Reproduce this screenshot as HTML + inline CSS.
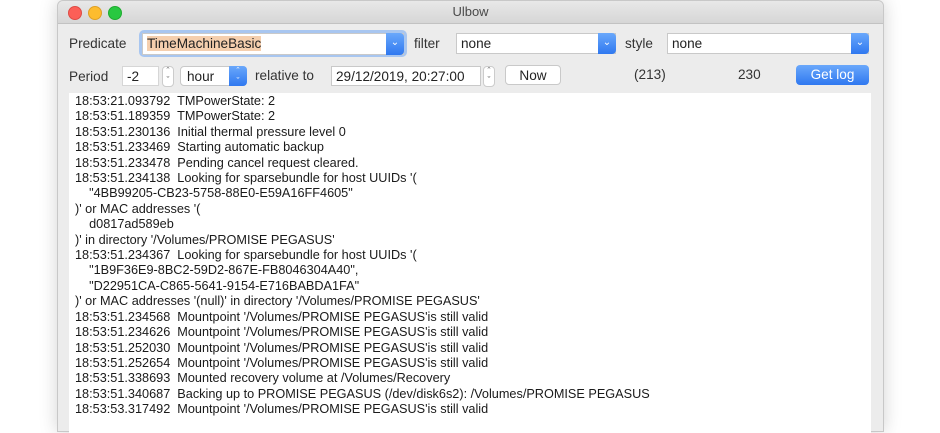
<!DOCTYPE html>
<html><head><style>
body{margin:0;width:940px;height:418px;background:#fff;position:relative;overflow:hidden;font-family:"Liberation Sans",sans-serif;font-size:13px;color:#222}
.win{position:absolute;left:57px;top:0;width:825px;height:430px;background:#ececec;border:1px solid #c8c8c8;border-radius:6px 6px 0 0;box-shadow:0 0 18px rgba(0,0,0,.18)}
.tb{position:absolute;left:0;top:0;width:825px;height:22px;background:linear-gradient(#e8e8e8,#d6d6d6);border-bottom:1px solid #c2c2c2;border-radius:6px 6px 0 0;text-align:center;line-height:22px;color:#4a4a4a;font-size:13px}
.dot{position:absolute;top:5px;width:12px;height:12px;border-radius:50%}
.a{position:absolute}
.lbl{position:absolute;font-size:13.6px;color:#333}
.box{position:absolute;background:#fff;border:1px solid #c9c9c9;box-sizing:border-box;font-size:13.6px;line-height:20px;padding-left:4px}
.bl{position:absolute;top:-1px;right:-1px;bottom:-1px;width:18px;background:linear-gradient(#6aa8fb,#2f78f0);border-radius:0 4px 4px 0;color:#fff;font-size:10px;text-align:center}
.log{position:absolute;left:11px;top:92px;width:802px;height:340px;background:#fff;font-size:12.7px;line-height:15.4px;padding:1px 0 0 6px;box-sizing:border-box;white-space:pre;color:#1a1a1a}
.st{position:absolute;width:12px;height:21px;border:1px solid #ccc;border-radius:4px;background:#fff;box-sizing:border-box;font-size:9px;line-height:9px;text-align:center;color:#555}
</style></head><body>
<div class="win">
<div class="tb">Ulbow
<div class="dot" style="left:10px;background:#fc5f57;border:0.5px solid #de4b44"></div>
<div class="dot" style="left:30px;background:#fdbc2e;border:0.5px solid #dfa024"></div>
<div class="dot" style="left:50px;background:#28c840;border:0.5px solid #1eab2f"></div>
</div>
<div class="lbl" style="left:11px;top:35px">Predicate</div>
<div class="a" style="left:81px;top:29px;width:268px;height:27px;border-radius:5px;background:#a8c6f0"></div>
<div class="box" style="left:84px;top:32px;width:262px;height:22px"><span style="background:#f5cfae">TimeMachineBasic</span><div class="bl">&#8964;</div></div>
<div class="lbl" style="left:356px;top:35px">filter</div>
<div class="box" style="left:398px;top:32px;width:160px;height:21px">none<div class="bl">&#8964;</div></div>
<div class="lbl" style="left:567px;top:35px">style</div>
<div class="box" style="left:609px;top:32px;width:202px;height:21px">none<div class="bl">&#8964;</div></div>

<div class="lbl" style="left:11px;top:68px">Period</div>
<div class="box" style="left:64px;top:65px;width:37px;height:20px;border-color:#d6d6d6">-2</div>
<div class="st" style="left:104px;top:65px">&#710;<br>&#711;</div>
<div class="box" style="left:122px;top:65px;width:67px;height:20px;border-radius:4px;padding-left:6px">hour<div class="bl" style="font-size:9px;line-height:10px">&#710;<br>&#711;</div></div>
<div class="lbl" style="left:197px;top:67px">relative to</div>
<div class="box" style="left:273px;top:65px;width:150px;height:20px">29/12/2019, 20:27:00</div>
<div class="st" style="left:425px;top:65px">&#710;<br>&#711;</div>
<div class="box" style="left:447px;top:64px;width:56px;height:20px;border-radius:4px;text-align:center;padding:0">Now</div>
<div class="lbl" style="left:576px;top:66px">(213)</div>
<div class="lbl" style="left:680px;top:66px">230</div>
<div class="a" style="left:738px;top:64px;width:73px;height:20px;border-radius:4px;background:linear-gradient(#6aa8fb,#2f78f0);color:#fff;text-align:center;line-height:20px;font-size:13.6px">Get log</div>

<div class="log">18:53:21.093792  TMPowerState: 2
18:53:51.189359  TMPowerState: 2
18:53:51.230136  Initial thermal pressure level 0
18:53:51.233469  Starting automatic backup
18:53:51.233478  Pending cancel request cleared.
18:53:51.234138  Looking for sparsebundle for host UUIDs '(
    "4BB99205-CB23-5758-88E0-E59A16FF4605"
)' or MAC addresses '(
    d0817ad589eb
)' in directory '/Volumes/PROMISE PEGASUS'
18:53:51.234367  Looking for sparsebundle for host UUIDs '(
    "1B9F36E9-8BC2-59D2-867E-FB8046304A40",
    "D22951CA-C865-5641-9154-E716BABDA1FA"
)' or MAC addresses '(null)' in directory '/Volumes/PROMISE PEGASUS'
18:53:51.234568  Mountpoint '/Volumes/PROMISE PEGASUS'is still valid
18:53:51.234626  Mountpoint '/Volumes/PROMISE PEGASUS'is still valid
18:53:51.252030  Mountpoint '/Volumes/PROMISE PEGASUS'is still valid
18:53:51.252654  Mountpoint '/Volumes/PROMISE PEGASUS'is still valid
18:53:51.338693  Mounted recovery volume at /Volumes/Recovery
18:53:51.340687  Backing up to PROMISE PEGASUS (/dev/disk6s2): /Volumes/PROMISE PEGASUS
18:53:53.317492  Mountpoint '/Volumes/PROMISE PEGASUS'is still valid</div>
</div>
</body></html>
